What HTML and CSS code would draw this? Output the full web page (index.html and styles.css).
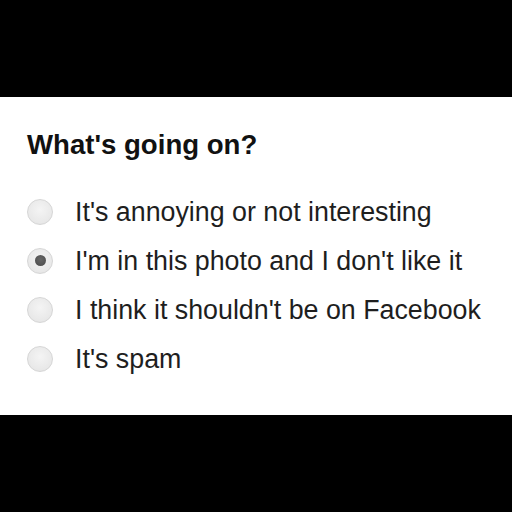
FILE: index.html
```html
<!DOCTYPE html>
<html>
<head>
<meta charset="utf-8">
<link rel="stylesheet" href="styles.css">
</head>
<body>
<div class="bar"></div>
<div class="panel">
  <h1 class="title">What's going on?</h1>
  <ul class="options">
    <li class="option"><span class="radio"></span><span class="label">It's annoying or not interesting</span></li>
    <li class="option"><span class="radio checked"></span><span class="label">I'm in this photo and I don't like it</span></li>
    <li class="option"><span class="radio"></span><span class="label">I think it shouldn't be on Facebook</span></li>
    <li class="option"><span class="radio"></span><span class="label">It's spam</span></li>
  </ul>
</div>
<div class="bar bottom"></div>
</body>
</html>
```

FILE: styles.css
```css
html, body {
  margin: 0;
  padding: 0;
  background: #000;
  width: 512px;
  height: 512px;
  overflow: hidden;
  font-family: "Liberation Sans", Arial, sans-serif;
}
.bar {
  height: 97px;
  background: #000;
}
.panel {
  height: 318px;
  background: #fff;
  padding: 0 0 0 27px;
  box-sizing: border-box;
  overflow: hidden;
}
.title {
  margin: 33px 0 0 0;
  font-size: 27.6px;
  line-height: 30px;
  font-weight: bold;
  color: #111;
}
.options {
  list-style: none;
  margin: 27px 0 0 0;
  padding: 0;
}
.option {
  display: flex;
  align-items: center;
  height: 49px;
  gap: 22px;
}
.radio {
  flex: none;
  width: 26px;
  height: 26px;
  border-radius: 50%;
  box-sizing: border-box;
  border: 1px solid #d6d6d6;
  background: radial-gradient(circle at 50% 40%, #f4f4f4 0%, #e8e8e8 70%, #dadada 100%);
  display: flex;
  align-items: center;
  justify-content: center;
}
.radio.checked::after {
  content: "";
  width: 11px;
  height: 11px;
  border-radius: 50%;
  background: radial-gradient(circle at 50% 40%, #666 0%, #4a4a4a 100%);
}
.label {
  font-size: 26.8px;
  color: #1e1e1e;
  line-height: 30px;
}
```
